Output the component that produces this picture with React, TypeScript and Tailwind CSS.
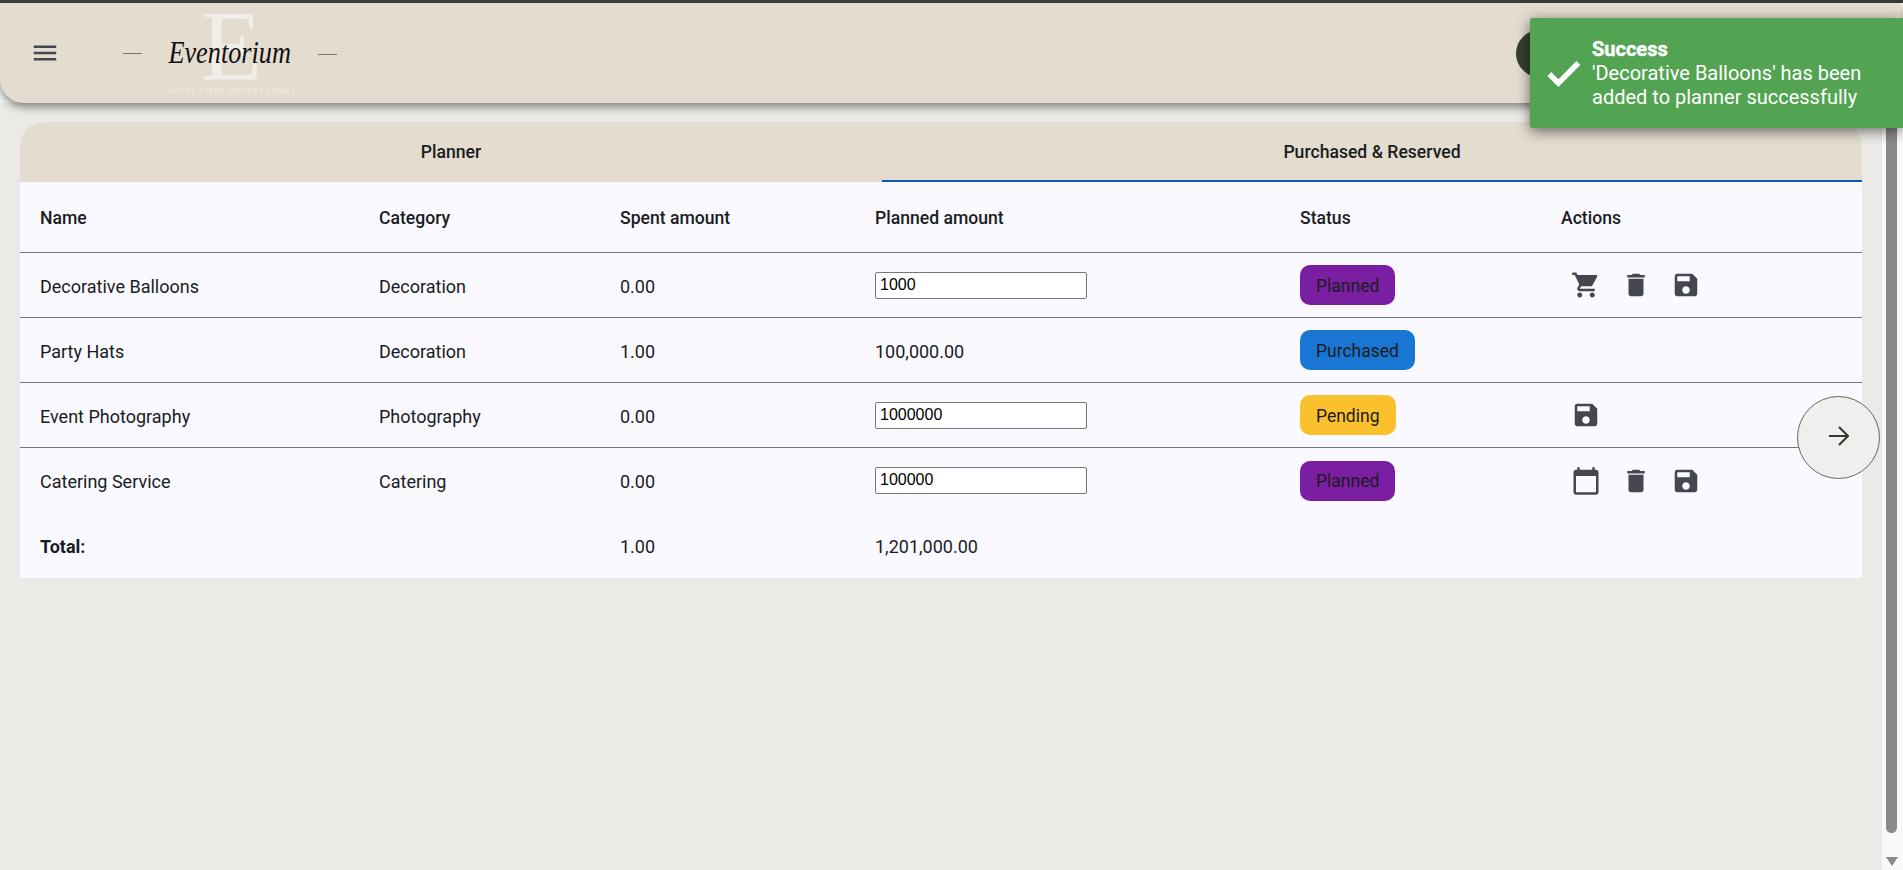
import React from "react";

const P = {
  cart: "M7 18c-1.1 0-1.99.9-1.99 2S5.9 22 7 22s2-.9 2-2-.9-2-2-2zM1 2v2h2l3.6 7.59-1.35 2.45c-.16.28-.25.61-.25.96 0 1.1.9 2 2 2h12v-2H7.42c-.14 0-.25-.11-.25-.25l.03-.12.9-1.63h7.45c.75 0 1.41-.41 1.75-1.03l3.58-6.49c.08-.14.12-.31.12-.48 0-.55-.45-1-1-1H5.21l-.94-2H1zm16 16c-1.1 0-1.99.9-1.99 2s.89 2 1.99 2 2-.9 2-2-.9-2-2-2z",
  del: "M6 19c0 1.1.9 2 2 2h8c1.1 0 2-.9 2-2V7H6v12zM19 4h-3.5l-1-1h-5l-1 1H5v2h14V4z",
  save: "M17 3H5c-1.11 0-2 .9-2 2v14c0 1.1.89 2 2 2h14c1.1 0 2-.9 2-2V7l-4-4zm-5 16c-1.66 0-3-1.34-3-3s1.34-3 3-3 3 1.34 3 3-1.34 3-3 3zm3-10H5V5h10v4z",
  cal: "M20 3h-1V1h-2v2H7V1H5v2H4c-1.1 0-2 .9-2 2v16c0 1.1.9 2 2 2h16c1.1 0 2-.9 2-2V5c0-1.1-.9-2-2-2zm0 18H4V8h16v13z",
  menu: "M3 18h18v-2H3v2zm0-5h18v-2H3v2zm0-7v2h18V6H3z",
  check: "M9 16.17L4.83 12l-1.42 1.41L9 19 21 7l-1.41-1.41z",
};

function Icon({ d, className }: { d: string; className: string }) {
  return (
    <svg viewBox="0 0 24 24" className={className} fill="currentColor" aria-hidden="true">
      <path d={d} />
    </svg>
  );
}

function Action({ d }: { d: string }) {
  return (
    <button className="flex w-[50px] items-center justify-center text-[#44474f]">
      <Icon d={d} className="h-[30px] w-[30px]" />
    </button>
  );
}

function Badge({ label, color }: { label: string; color: string }) {
  return (
    <span className={`inline-flex h-10 items-center rounded-[10px] px-4 pt-[2px] text-[17.5px] ${color}`}>{label}</span>
  );
}

function Amount({ value }: { value: string }) {
  return (
    <input
      readOnly
      value={value}
      className="block h-[27px] w-[212px] rounded-[2px] border border-[#767676] bg-white px-1 pb-px font-['Liberation_Sans',sans-serif] text-[16px] text-black outline-none"
    />
  );
}

const td = "pl-5 align-middle";
const tx = "pl-5 pt-[2px] align-middle";
const line = " border-b border-[#74757a]";
const th = "h-[71px] pl-5 pt-[2px] text-left align-middle text-[17.6px] font-medium border-b border-[#74757a]";
const purple = "bg-[#7b1fa2]";

export default function App() {
  return (
    <div className="relative flex h-[870px] w-full flex-col overflow-hidden bg-[#f9f9f9] font-['Roboto',sans-serif] text-[18px] text-[#1a1c1e]">
      <div className="h-[3px] w-full shrink-0 bg-[#3c3c3c]" />

      <header className="z-10 flex h-[100px] w-[1901px] shrink-0 items-center justify-between rounded-b-[24px] bg-[#e3dccf] pl-[30px] pr-[338px] shadow-[0_4px_8px_rgba(0,0,0,0.45)]">
        <div className="flex items-center">
          <Icon d={P.menu} className="h-[30px] w-[30px] text-[#44474f]" />
          <div className="relative ml-[63px] flex h-[100px] w-[214px] items-center justify-between">
            <span className="h-px w-[19px] bg-[#77756c]" />
            <span className="absolute left-[78px] top-[7px] font-['Liberation_Serif',serif] text-[100px] leading-[72px] text-[#f1eee9]">E</span>
            <span className="relative -top-[1px] scale-x-[0.82] font-['Liberation_Serif',serif] text-[32px] italic leading-none text-[#111111]">Eventorium</span>
            <span className="mt-[3px] h-px w-[19px] bg-[#77756c]" />
            <span className="absolute left-[44px] top-[83px] whitespace-nowrap font-['Lato',sans-serif] text-[7px] tracking-[0.85px] text-[#efebe4]">WHERE EVERY MOMENT SHINES</span>
          </div>
        </div>
        <div className="h-[47px] w-[47px] rounded-full bg-[#36402f]" />
      </header>

      <div className="flex min-h-0 flex-1">
        <main className="w-[1882px] shrink-0 bg-[#ebeae6] px-5 pt-[19px]">
          <div className="flex h-[60px] overflow-hidden rounded-t-[24px] bg-[#e3dccf] text-[17.6px] font-medium">
            <div className="flex w-[862px] items-center justify-center">Planner</div>
            <div className="flex flex-1 items-center justify-center border-b-2 border-[#0b5cb5] pt-[2px]">Purchased &amp; Reserved</div>
          </div>
          <table className="w-full table-fixed border-separate border-spacing-0 bg-[#f9f9ff]">
            <colgroup>
              <col className="w-[339px]" />
              <col className="w-[241px]" />
              <col className="w-[255px]" />
              <col className="w-[425px]" />
              <col className="w-[261px]" />
              <col />
            </colgroup>
            <thead>
              <tr>
                <th className={th}>Name</th>
                <th className={th}>Category</th>
                <th className={th}>Spent amount</th>
                <th className={th}>Planned amount</th>
                <th className={th}>Status</th>
                <th className={th}>Actions</th>
              </tr>
            </thead>
            <tbody>
              <tr className="h-[65px]">
                <td className={tx + line}>Decorative Balloons</td>
                <td className={tx + line}>Decoration</td>
                <td className={tx + line}>0.00</td>
                <td className={td + line}><Amount value="1000" /></td>
                <td className={td + line}><Badge label="Planned" color={purple} /></td>
                <td className={td + line}>
                  <div className="flex"><Action d={P.cart} /><Action d={P.del} /><Action d={P.save} /></div>
                </td>
              </tr>
              <tr className="h-[65px]">
                <td className={tx + line}>Party Hats</td>
                <td className={tx + line}>Decoration</td>
                <td className={tx + line}>1.00</td>
                <td className={tx + line}>100,000.00</td>
                <td className={td + line}><Badge label="Purchased" color="bg-[#1976d2]" /></td>
                <td className={td + line}></td>
              </tr>
              <tr className="h-[65px]">
                <td className={tx + line}>Event Photography</td>
                <td className={tx + line}>Photography</td>
                <td className={tx + line}>0.00</td>
                <td className={td + line}><Amount value="1000000" /></td>
                <td className={td + line}><Badge label="Pending" color="bg-[#fbc02d]" /></td>
                <td className={td + line}>
                  <div className="flex"><Action d={P.save} /></div>
                </td>
              </tr>
              <tr className="h-[65px]">
                <td className={tx}>Catering Service</td>
                <td className={tx}>Catering</td>
                <td className={tx}>0.00</td>
                <td className={td}><Amount value="100000" /></td>
                <td className={td}><Badge label="Planned" color={purple} /></td>
                <td className={td}>
                  <div className="flex"><Action d={P.cal} /><Action d={P.del} /><Action d={P.save} /></div>
                </td>
              </tr>
              <tr className="h-[65px]">
                <td className="pl-5 pt-[2px] align-middle font-bold">Total:</td>
                <td className={td}></td>
                <td className={tx}>1.00</td>
                <td className={tx}>1,201,000.00</td>
                <td className={td}></td>
                <td className={td}></td>
              </tr>
            </tbody>
          </table>
        </main>

        <div className="flex w-[21px] shrink-0 flex-col items-start bg-[#f9f9f9] pl-1">
          <div className="h-[730px] w-[11px] rounded-b-[6px] bg-[#8a8a8a]" />
          <svg viewBox="0 0 12 9" className="mt-[24px] h-[9px] w-3 fill-[#8a8a8a]" aria-hidden="true">
            <path d="M0 0h12L6 9z" />
          </svg>
        </div>
      </div>

      <button className="absolute left-[1797px] top-[396px] z-20 flex h-[83px] w-[83px] items-center justify-center rounded-full border border-[#5f6a5f] bg-[#eff0ee]">
        <svg viewBox="0 0 20 20" className="mb-[4px] h-[20px] w-[20px] fill-none stroke-[#2f3a2c] stroke-2" aria-hidden="true">
          <path d="M0 10h18.5M10 1l9 9-9 9" />
        </svg>
      </button>

      <div className="absolute left-[1530px] top-[18px] z-30 flex h-[110px] w-[373px] items-center rounded-l-[3px] bg-[#52a453] text-[20px] leading-6 text-white shadow-[0_3px_14px_rgba(0,0,0,0.55)]">
        <svg viewBox="0 0 24 24" className="ml-[13px] h-[41px] w-[41px] shrink-0 fill-white stroke-white stroke-[1.2]" aria-hidden="true">
          <path d={P.check} />
        </svg>
        <div className="ml-[8px] w-[300px]">
          <div className="font-bold [-webkit-text-stroke:0.4px_white]">Success</div>
          <div>'Decorative Balloons' has been added to planner successfully</div>
        </div>
      </div>
    </div>
  );
}
